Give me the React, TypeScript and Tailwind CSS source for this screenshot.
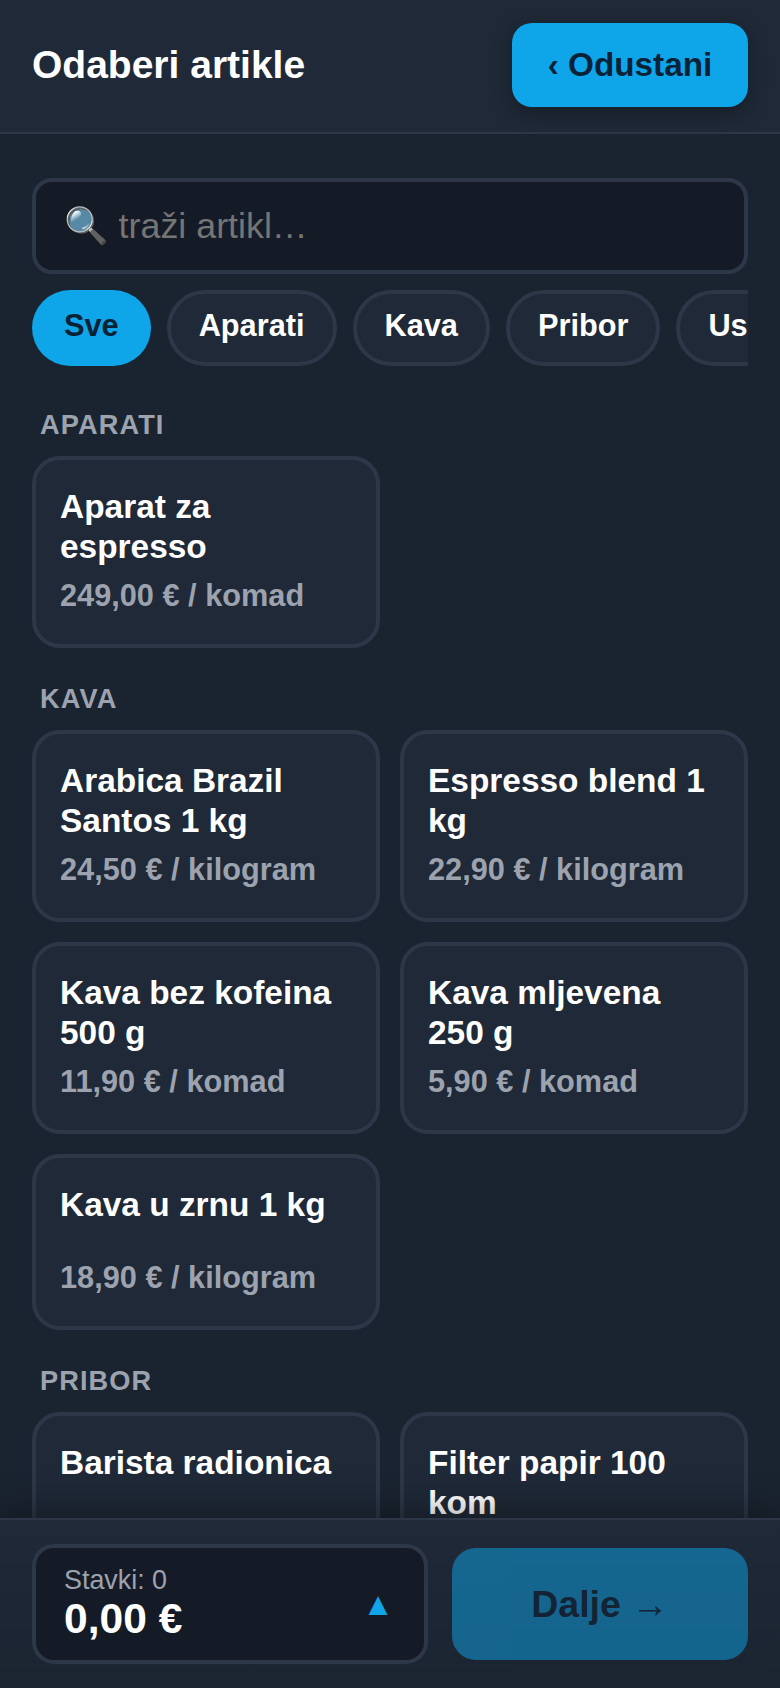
import React from 'react';

const font = { fontFamily: '"Liberation Sans", "Noto Color Emoji", sans-serif' };

interface Item {
    name: string;
    price: string;
}

interface Group {
    title: string;
    items: Item[];
}

const groups: Group[] = [
    { title: 'APARATI', items: [{ name: 'Aparat za espresso', price: '249,00 € / komad' }] },
    {
        title: 'KAVA',
        items: [
            { name: 'Arabica Brazil Santos 1 kg', price: '24,50 € / kilogram' },
            { name: 'Espresso blend 1 kg', price: '22,90 € / kilogram' },
            { name: 'Kava bez kofeina 500 g', price: '11,90 € / komad' },
            { name: 'Kava mljevena 250 g', price: '5,90 € / komad' },
            { name: 'Kava u zrnu 1 kg', price: '18,90 € / kilogram' },
        ],
    },
    {
        title: 'PRIBOR',
        items: [
            { name: 'Barista radionica', price: '35,00 € / komad' },
            { name: 'Filter papir 100 kom', price: '4,50 € / komad' },
        ],
    },
];

const chips = ['Aparati', 'Kava', 'Pribor', 'Usluge'];

const ItemCard: React.FC<{ item: Item }> = ({ item }) => (
    <div className="flex min-h-[176px] flex-col rounded-[28px] border-4 border-[#2d3748] bg-[#1f2937] px-6 pt-[27px] pb-7">
        <div className="text-[33.44px] leading-[40px] font-bold text-white">{item.name}</div>
        <div className="mt-auto pt-[9px] text-[30.72px] leading-[40px] font-bold text-[#9ca3af]">{item.price}</div>
    </div>
);

export default function App() {
    return (
        <div style={font} className="flex h-[1688px] w-[780px] flex-col overflow-hidden bg-[#1a2430]">
            {/* Header */}
            <header className="flex h-[134px] shrink-0 items-center justify-between border-b-2 border-[#2d3748] bg-[#1f2937] px-8 pb-[2px]">
                <h1 className="text-[39px] font-bold text-white">Odaberi artikle</h1>
                <button className="h-[84px] w-[236px] rounded-[20px] bg-[#0ea5e9] text-[33.28px] font-bold text-[#0a2236] shadow-[0_6px_20px_rgba(0,0,0,0.3)]">
                    ‹ Odustani
                </button>
            </header>

            {/* Content */}
            <main className="min-h-0 flex-1 overflow-hidden px-8 pt-[44px]">
                <div className="flex h-[96px] items-center rounded-[20px] border-4 border-[#2d3748] bg-[#151b26] px-7 pt-[2px]">
                    <input
                        placeholder="🔍 traži artikl…"
                        className="w-full bg-transparent text-[35.84px] text-white outline-none placeholder:text-[#757575]"
                    />
                </div>

                <div className="mt-4 flex gap-4 overflow-hidden pb-2">
                    <div className="flex h-[76px] shrink-0 items-center rounded-full bg-[#0ea5e9] px-8 pb-1 text-[30.72px] font-bold text-[#0a2236]">
                        Sve
                    </div>
                    {chips.map((c) => (
                        <div
                            key={c}
                            className="flex h-[76px] shrink-0 items-center rounded-full border-4 border-[#2d3748] bg-[#1f2937] px-7 pb-1 text-[30.72px] font-bold text-white"
                        >
                            {c}
                        </div>
                    ))}
                </div>

                {groups.map((g) => (
                    <section key={g.title}>
                        <div className="mt-[31px] mb-[11px] px-2 text-[27.2px] leading-[40px] font-bold tracking-[1.1px] text-[#9ca3af]">
                            {g.title}
                        </div>
                        <div className="grid grid-cols-2 gap-5">
                            {g.items.map((item) => (
                                <ItemCard key={item.name} item={item} />
                            ))}
                        </div>
                    </section>
                ))}
            </main>

            {/* Footer */}
            <footer className="relative z-10 flex h-[170px] shrink-0 items-center gap-6 border-t-2 border-[#2d3748] bg-gradient-to-b from-[#1f2937] to-[#1b2431] px-8 shadow-[0_-8px_32px_rgba(0,0,0,0.35)]">
                <div className="flex h-[120px] w-[396px] shrink-0 items-center justify-between rounded-[22px] border-4 border-[#2d3748] bg-[#151b26] pr-[30px] pl-7">
                    <div className="pb-1">
                        <div className="text-[26.88px] leading-[32px] text-[#9ca3af]">Stavki: 0</div>
                        <div className="text-[42.56px] leading-[44px] font-bold text-white">0,00 €</div>
                    </div>
                    <span className="text-[32px] text-[#0ea5e9]">▲</span>
                </div>
                <button className="h-[112px] flex-1 rounded-[24px] bg-[#0ea5e9] text-[37.5px] font-bold text-[#0a2236] opacity-50">
                    Dalje →
                </button>
            </footer>
        </div>
    );
}
